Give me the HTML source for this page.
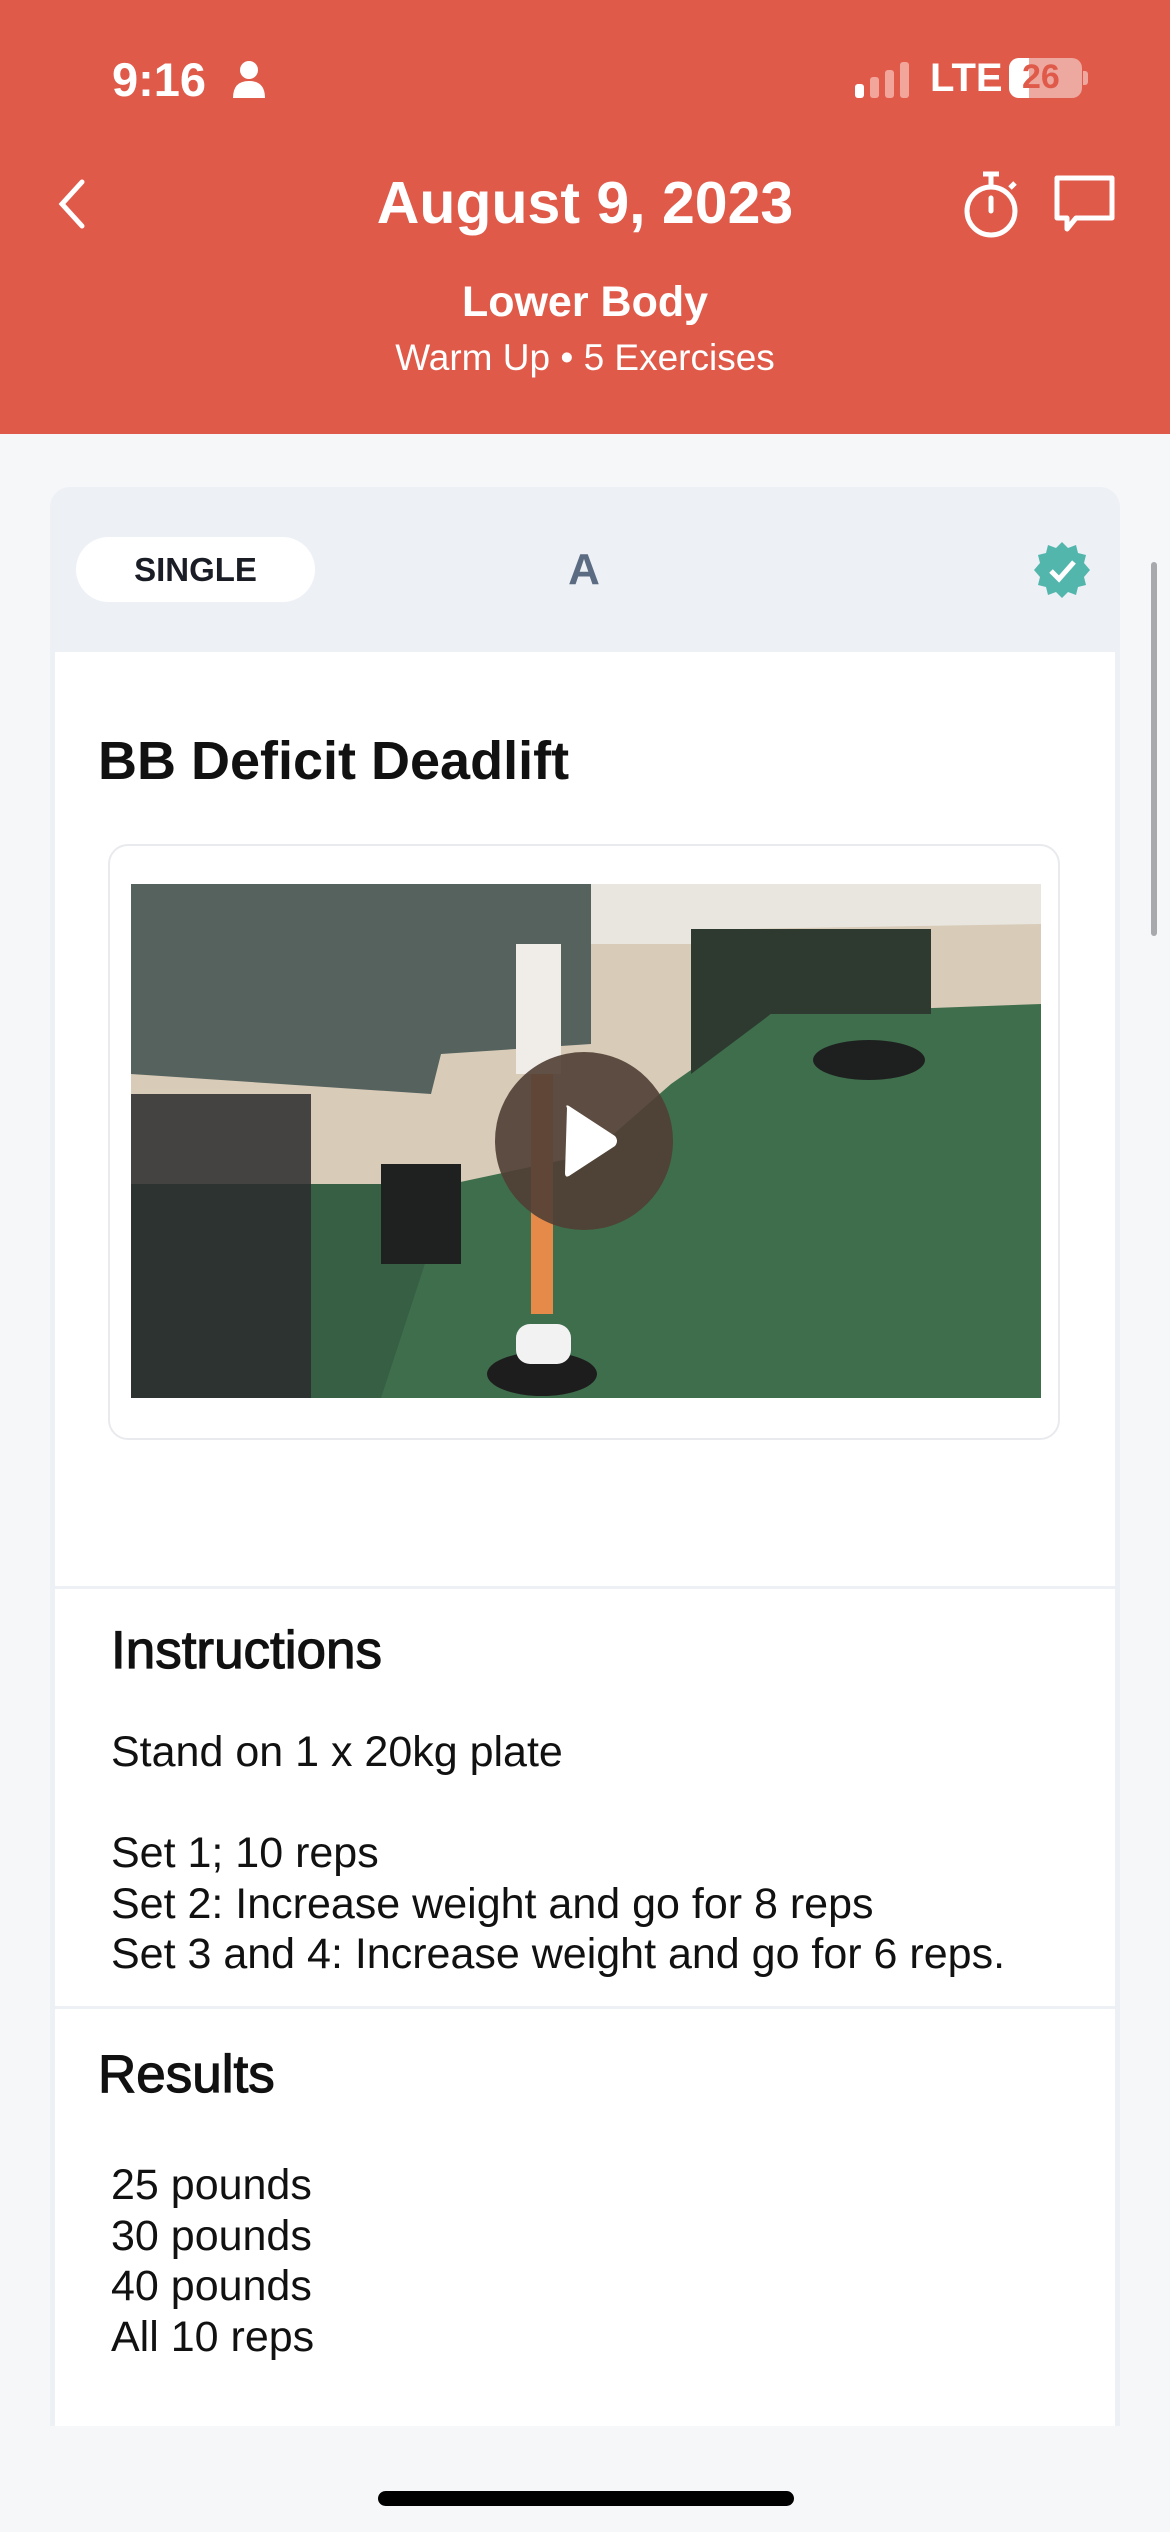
<!DOCTYPE html>
<html><head><meta charset="utf-8"><style>
*{margin:0;padding:0;box-sizing:border-box}
body{width:1170px;height:2532px;background:#F6F7F9;font-family:"Liberation Sans",sans-serif;position:relative;overflow:hidden}
.hdr{position:absolute;left:0;top:0;width:1170px;height:434px;background:#E05A4A;color:#fff}
.abs{position:absolute}
.card{position:absolute;left:50px;top:487px;width:1070px;height:1960px;background:#EDF0F5;border-radius:20px}
.inner{position:absolute;left:5px;top:165px;width:1060px;height:1795px;background:#fff}
.line{position:absolute;left:0;width:1060px;height:3px;background:#EDF0F5}
.txt{font-size:43px;color:#111;line-height:50.5px}
.med{-webkit-text-stroke:1.2px #111;color:#111}
</style></head><body>
<div class="hdr">
  <div class="abs" style="left:112px;top:52px;font-size:47px;font-weight:bold">9:16</div>
  <svg class="abs" style="left:231px;top:60px" width="36" height="38" viewBox="0 0 36 38"><circle cx="18" cy="10" r="9" fill="#fff"/><path d="M2 38 Q2 21 18 21 Q34 21 34 38Z" fill="#fff"/></svg>
  <svg class="abs" style="left:855px;top:62px" width="60" height="36"><rect x="0" y="22" width="9" height="14" rx="3" fill="#fff"/><rect x="15" y="15" width="9" height="21" rx="3" fill="#f1a59b"/><rect x="30" y="8" width="9" height="28" rx="3" fill="#f1a59b"/><rect x="45" y="0" width="9" height="36" rx="3" fill="#f1a59b"/></svg>
  <div class="abs" style="left:930px;top:56px;font-size:40px;font-weight:bold">LTE</div>
  <div class="abs" style="left:1009px;top:58px;width:73px;height:40px;border-radius:10px;background:#EDA89F;overflow:hidden"><div style="width:20px;height:40px;background:#fff"></div></div>
  <div class="abs" style="left:1083px;top:71px;width:5px;height:14px;border-radius:0 3px 3px 0;background:#EDA89F"></div>
  <div class="abs" style="left:1022px;top:58px;font-size:34px;font-weight:bold;color:#E05A4A">26</div>
  <svg class="abs" style="left:54px;top:178px" width="34" height="52"><path d="M28 4 L8 26 L28 48" fill="none" stroke="#fff" stroke-width="5" stroke-linecap="round"/></svg>
  <div class="abs" style="left:0;top:169px;width:1170px;text-align:center;font-size:59px;font-weight:bold">August 9, 2023</div>
  <svg class="abs" style="left:958px;top:170px" width="66" height="70" viewBox="0 0 66 70"><circle cx="33" cy="41" r="24" fill="none" stroke="#fff" stroke-width="5"/><line x1="33" y1="4" x2="33" y2="17" stroke="#fff" stroke-width="5"/><line x1="25" y1="4" x2="41" y2="4" stroke="#fff" stroke-width="5"/><line x1="33" y1="28" x2="33" y2="41" stroke="#fff" stroke-width="5" stroke-linecap="round"/><line x1="52" y1="18" x2="57" y2="13" stroke="#fff" stroke-width="5"/></svg>
  <svg class="abs" style="left:1052px;top:174px" width="66" height="66" viewBox="0 0 66 66"><path d="M5 4 H60 V44 H24 L15 55 V44 H5Z" fill="none" stroke="#fff" stroke-width="5" stroke-linejoin="round"/></svg>
  <div class="abs" style="left:0;top:278px;width:1170px;text-align:center;font-size:43px;font-weight:bold">Lower Body</div>
  <div class="abs" style="left:0;top:337px;width:1170px;text-align:center;font-size:37px">Warm Up • 5 Exercises</div>
</div>
<div class="card">
  <div class="abs" style="left:26px;top:50px;width:239px;height:65px;border-radius:33px;background:#fff;text-align:center;line-height:65px;font-size:33px;font-weight:bold;color:#1a1d26">SINGLE</div>
  <div class="abs" style="left:484px;top:58px;width:100px;text-align:center;font-size:44px;font-weight:bold;color:#5B6B82">A</div>
  <svg class="abs" style="left:982px;top:53px" width="60" height="60" viewBox="0 0 60 60"><polygon points="30,2 36,8 44,5 46,13 54,15 52,23 58,30 52,37 54,45 46,47 44,55 36,52 30,58 24,52 16,55 14,47 6,45 8,37 2,30 8,23 6,15 14,13 16,5 24,8" fill="#53B6AC"/><path d="M19 31 L27 39 L42 22" fill="none" stroke="#fff" stroke-width="5"/></svg>
  <div class="inner">
    <div class="abs" style="left:43px;top:78px;font-size:54px;font-weight:bold;color:#111">BB Deficit Deadlift</div>
    <div class="abs" style="left:53px;top:192px;width:952px;height:596px;border:2px solid #E8EAEE;border-radius:20px"></div>
    <svg class="abs" style="left:76px;top:232px" width="910" height="514" viewBox="0 0 910 514">
      <rect width="910" height="514" fill="#3F6E4C"/>
      <polygon points="0,0 910,0 910,120 640,130 540,200 460,270 320,300 0,300" fill="#D8CBB8"/>
      <polygon points="0,0 460,0 460,160 310,170 300,210 0,190" fill="#55625E"/>
      <polygon points="460,0 910,0 910,40 610,45 560,60 460,60" fill="#E9E6E0"/>
      <polygon points="560,45 800,45 800,130 640,130 560,190" fill="#2E3A30"/>
      <polygon points="0,300 320,300 250,514 0,514" fill="#365F43"/>
      <rect x="0" y="210" width="180" height="304" fill="#2b2b2d" opacity=".85"/>
      <rect x="250" y="280" width="80" height="100" fill="#1f2020"/>
      <ellipse cx="738" cy="176" rx="56" ry="20" fill="#1e2020"/>
      <rect x="385" y="60" width="45" height="130" fill="#f0ede9"/>
      <rect x="400" y="190" width="22" height="240" fill="#E58A48"/>
      <ellipse cx="411" cy="490" rx="55" ry="22" fill="#1d1d1d"/>
      <rect x="385" y="440" width="55" height="40" rx="14" fill="#f2f2f2"/>
    </svg>
    <div class="abs" style="left:440px;top:400px;width:178px;height:178px;border-radius:50%;background:rgba(80,62,52,.9)"></div>
    <svg class="abs" style="left:440px;top:400px" width="178" height="178"><path d="M72 56 Q70 52 74 54 L120 84 Q124 89 120 94 L74 124 Q70 126 70 121Z" fill="#fff"/></svg>
    <div class="line" style="top:934px"></div>
    <div class="abs med" style="left:56px;top:968px;font-size:53px">Instructions</div>
    <div class="abs txt" style="left:56px;top:1075px">Stand on 1 x 20kg plate<br><br>Set 1; 10 reps<br>Set 2: Increase weight and go for 8 reps<br>Set 3 and 4: Increase weight and go for 6 reps.</div>
    <div class="line" style="top:1354px"></div>
    <div class="abs med" style="left:43px;top:1392px;font-size:53px">Results</div>
    <div class="abs txt" style="left:56px;top:1508px">25 pounds<br>30 pounds<br>40 pounds<br>All 10 reps</div>
  </div>
</div>
<div class="abs" style="left:0;top:2426px;width:1170px;height:106px;background:#F6F7F9"></div>
<div class="abs" style="left:1151px;top:562px;width:6px;height:374px;border-radius:3px;background:#A8A9AC"></div>
<div class="abs" style="left:378px;top:2491px;width:416px;height:15px;border-radius:8px;background:#000"></div>
</body></html>
